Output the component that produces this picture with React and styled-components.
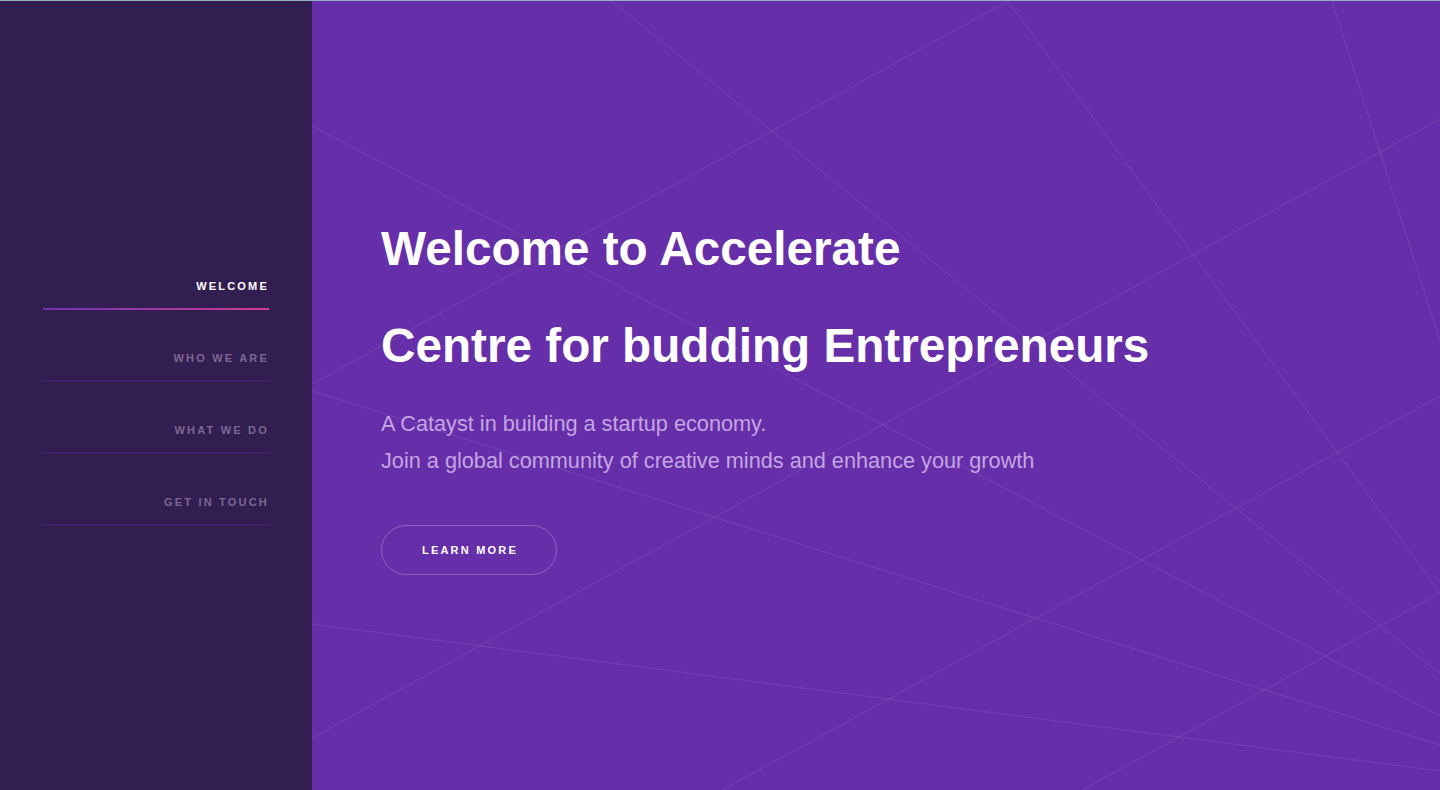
import React from "react";
import styled, { createGlobalStyle } from "styled-components";

const GlobalStyle = createGlobalStyle`
  html, body {
    margin: 0;
    padding: 0;
    height: 100%;
  }
  body {
    font-family: "Liberation Sans", Arial, sans-serif;
    background-color: #331e52;
  }
  * {
    box-sizing: border-box;
  }
`;

const Page = styled.div`
  display: flex;
  height: 100vh;
  border-top: 1px solid #8fb4bf;
  overflow: hidden;
`;

const Sidebar = styled.aside`
  width: 312px;
  flex-shrink: 0;
  background-color: #331e52;
  padding: 278px 43px 0 43px;
`;

const Nav = styled.nav`
  display: flex;
  flex-direction: column;
  gap: 41px;
`;

const NavItem = styled.a`
  display: block;
  text-align: right;
  font-size: 11px;
  line-height: 14px;
  font-weight: 700;
  letter-spacing: 0.2em;
  text-transform: uppercase;
  text-decoration: none;
  padding-bottom: 15px;
  color: ${(p) => (p.$active ? "#ffffff" : "#7b6891")};
  border-bottom: 2px solid #3e2167;
  border-image: ${(p) =>
    p.$active ? "linear-gradient(90deg, #6b33b4, #d23d8e) 1" : "none"};
`;

const Main = styled.main`
  position: relative;
  flex: 1;
  background-color: #662ea8;
  padding: 199px 0 0 69px;
`;

const Lines = styled.svg`
  position: absolute;
  top: 0;
  left: 0;
  width: 100%;
  height: 100%;
  pointer-events: none;
`;

const Content = styled.div`
  position: relative;
`;

const Title = styled.h1`
  margin: 0;
  color: #ffffff;
  font-size: 47.7px;
  line-height: 97px;
  font-weight: 700;
`;

const Lead = styled.p`
  margin: 12px 0 0;
  color: #c4a5e3;
  font-size: 21.7px;
  line-height: 36.7px;
`;

const Button = styled.a`
  display: inline-flex;
  align-items: center;
  justify-content: center;
  margin-top: 46px;
  width: 176px;
  height: 50px;
  border: 1px solid rgba(255, 255, 255, 0.25);
  border-radius: 25px;
  color: #ffffff;
  font-size: 11px;
  font-weight: 700;
  letter-spacing: 0.2em;
  padding-left: 2px;
  text-decoration: none;
  text-transform: uppercase;
`;

const lines = [
  [300, 0, 1128, 673],
  [0, 125, 1128, 715],
  [0, 383, 696, 0],
  [696, 0, 1128, 592],
  [1020, 0, 1128, 340],
  [0, 737, 1128, 118],
  [0, 390, 1128, 744],
  [0, 623, 1128, 770],
  [769, 790, 1128, 592],
  [409, 790, 1128, 395],
];

const navItems = ["Welcome", "Who we are", "What we do", "Get in touch"];

const App = () => {
  return (
    <>
      <GlobalStyle />
      <Page>
        <Sidebar>
          <Nav>
            {navItems.map((item, i) => (
              <NavItem key={item} href="#" $active={i === 0}>
                {item}
              </NavItem>
            ))}
          </Nav>
        </Sidebar>
        <Main>
          <Lines viewBox="0 0 1128 789" preserveAspectRatio="none">
            {lines.map(([x1, y1, x2, y2], i) => (
              <line
                key={i}
                x1={x1}
                y1={y1}
                x2={x2}
                y2={y2}
                stroke="rgba(255,255,255,0.1)"
                strokeWidth="1"
              />
            ))}
          </Lines>
          <Content>
            <Title>
              Welcome to Accelerate
              <br />
              Centre for budding Entrepreneurs
            </Title>
            <Lead>
              A Catayst in building a startup economy.
              <br />
              Join a global community of creative minds and enhance your growth
            </Lead>
            <Button href="#">Learn more</Button>
          </Content>
        </Main>
      </Page>
    </>
  );
};

export default App;
